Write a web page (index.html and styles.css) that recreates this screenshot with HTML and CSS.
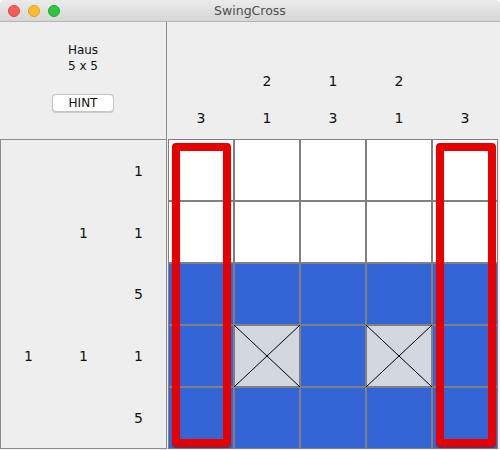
FILE: index.html
```html
<!DOCTYPE html>
<html>
<head>
<meta charset="utf-8">
<title>SwingCross</title>
<link rel="stylesheet" href="styles.css">
</head>
<body>
<div class="window">
  <div class="titlebar">
    <div class="lights">
      <span class="light red"></span>
      <span class="light yellow"></span>
      <span class="light green"></span>
    </div>
    <div class="title">SwingCross</div>
  </div>
  <div class="main">
    <div class="info">
      <div class="name">Haus<br>5 x 5</div>
      <button class="hint">HINT</button>
    </div>
    <div class="colclues">
      <span></span><span>2</span><span>1</span><span>2</span><span></span>
      <span>3</span><span>1</span><span>3</span><span>1</span><span>3</span>
    </div>
    <div class="rowclues">
      <span></span><span></span><span>1</span>
      <span></span><span>1</span><span>1</span>
      <span></span><span></span><span>5</span>
      <span>1</span><span>1</span><span>1</span>
      <span></span><span></span><span>5</span>
    </div>
    <div class="board">
      <div class="grid">
        <div class="cell"></div><div class="cell"></div><div class="cell"></div><div class="cell"></div><div class="cell"></div>
        <div class="cell"></div><div class="cell"></div><div class="cell"></div><div class="cell"></div><div class="cell"></div>
        <div class="cell fill"></div><div class="cell fill"></div><div class="cell fill"></div><div class="cell fill"></div><div class="cell fill"></div>
        <div class="cell fill"></div>
        <div class="cell cross"><svg viewBox="0 0 64 60" preserveAspectRatio="none"><line x1="-1" y1="-1" x2="65" y2="61"/><line x1="65" y1="-1" x2="-1" y2="61"/></svg></div>
        <div class="cell fill"></div>
        <div class="cell cross"><svg viewBox="0 0 64 60" preserveAspectRatio="none"><line x1="-1" y1="-1" x2="65" y2="61"/><line x1="65" y1="-1" x2="-1" y2="61"/></svg></div>
        <div class="cell fill"></div>
        <div class="cell fill"></div><div class="cell fill"></div><div class="cell fill"></div><div class="cell fill"></div><div class="cell fill"></div>
      </div>
      <div class="marks">
        <div class="mark mark1"></div>
        <div class="mark mark5"></div>
      </div>
    </div>
  </div>
</div>
</body>
</html>
```

FILE: styles.css
```css
html, body {
  margin: 0;
  padding: 0;
  background: #ffffff;
}
.window {
  width: 500px;
  height: 450px;
  overflow: hidden;
  background: #eeeeee;
  border-radius: 5px 5px 0 0;
  font-family: "DejaVu Sans", "Liberation Sans", sans-serif;
}
.titlebar {
  height: 21px;
  border-bottom: 1px solid #b4b4b4;
  background: linear-gradient(#ebebeb, #d6d6d6);
  display: flex;
  align-items: center;
  position: relative;
}
.lights {
  display: flex;
  gap: 8px;
  padding-left: 8px;
  padding-top: 1px;
}
.light {
  width: 12px;
  height: 12px;
  border-radius: 50%;
  box-sizing: border-box;
}
.red { background: #fc5b57; border: 1px solid #e2463f; }
.yellow { background: #fdbb2f; border: 1px solid #e1a116; }
.green { background: #2fc53f; border: 1px solid #1aab29; }
.title {
  position: absolute;
  left: 0;
  right: 0;
  top: 3px;
  text-align: center;
  font-size: 12.5px;
  color: #4d4d4d;
}
.main {
  display: grid;
  grid-template-columns: 167px 333px;
  grid-template-rows: 117px 311px;
}
.info {
  box-sizing: border-box;
  border-right: 1px solid #8c8c8c;
  display: flex;
  flex-direction: column;
  align-items: center;
  padding-top: 21px;
}
.name {
  font-size: 12px;
  line-height: 15.5px;
  text-align: center;
  color: #111;
}
.hint {
  margin-top: 20px;
  width: 62px;
  height: 18px;
  padding: 0;
  background: #ffffff;
  border: 1px solid #c4c4c4;
  border-radius: 4px;
  font-family: "DejaVu Sans", "Liberation Sans", sans-serif;
  font-size: 12px;
  color: #111;
  box-shadow: 0 0.5px 1px rgba(0,0,0,0.15);
}
.colclues {
  box-sizing: border-box;
  padding: 3px 0 0 1px;
  display: grid;
  grid-template-columns: repeat(5, 66px);
  grid-template-rows: 37px 37px 37px;
  font-size: 14px;
  color: #111;
}
.colclues::before {
  content: "";
  grid-column: 1 / 6;
}
.colclues span {
  display: flex;
  align-items: center;
  justify-content: center;
}
.rowclues {
  box-sizing: border-box;
  height: 310px;
  border: 1px solid #8c8c8c;
  display: grid;
  grid-template-columns: repeat(3, 1fr);
  grid-template-rows: repeat(5, 1fr);
  font-size: 14px;
  color: #111;
}
.rowclues span {
  display: flex;
  align-items: center;
  justify-content: center;
  padding-top: 1px;
}
.board {
  padding-left: 1px;
  position: relative;
}
.grid, .marks {
  width: 330px;
  height: 310px;
  box-sizing: border-box;
  padding: 1px;
  display: grid;
  grid-template-columns: repeat(5, 64px);
  grid-template-rows: repeat(5, 60px);
  gap: 2px;
}
.grid {
  background: #808080;
}
.marks {
  position: absolute;
  top: 0;
  left: 1px;
  pointer-events: none;
}
.cell {
  background: #ffffff;
}
.cell.fill {
  background: #3465d6;
}
.cell.cross {
  background: #d3d8e0;
}
.cell.cross svg {
  display: block;
  width: 64px;
  height: 60px;
  overflow: visible;
}
.cell.cross line {
  stroke: #000;
  stroke-width: 1;
}
.mark {
  grid-row: 1 / 6;
  border: 8px solid #e60000;
  border-radius: 4px;
  box-shadow: 0 1px 1px rgba(60,0,0,0.45);
}
.mark1 {
  grid-column: 1;
  margin: 3px 2px 1px 3px;
}
.mark5 {
  grid-column: 5;
  margin: 3px 1px 1px 3px;
}
```
